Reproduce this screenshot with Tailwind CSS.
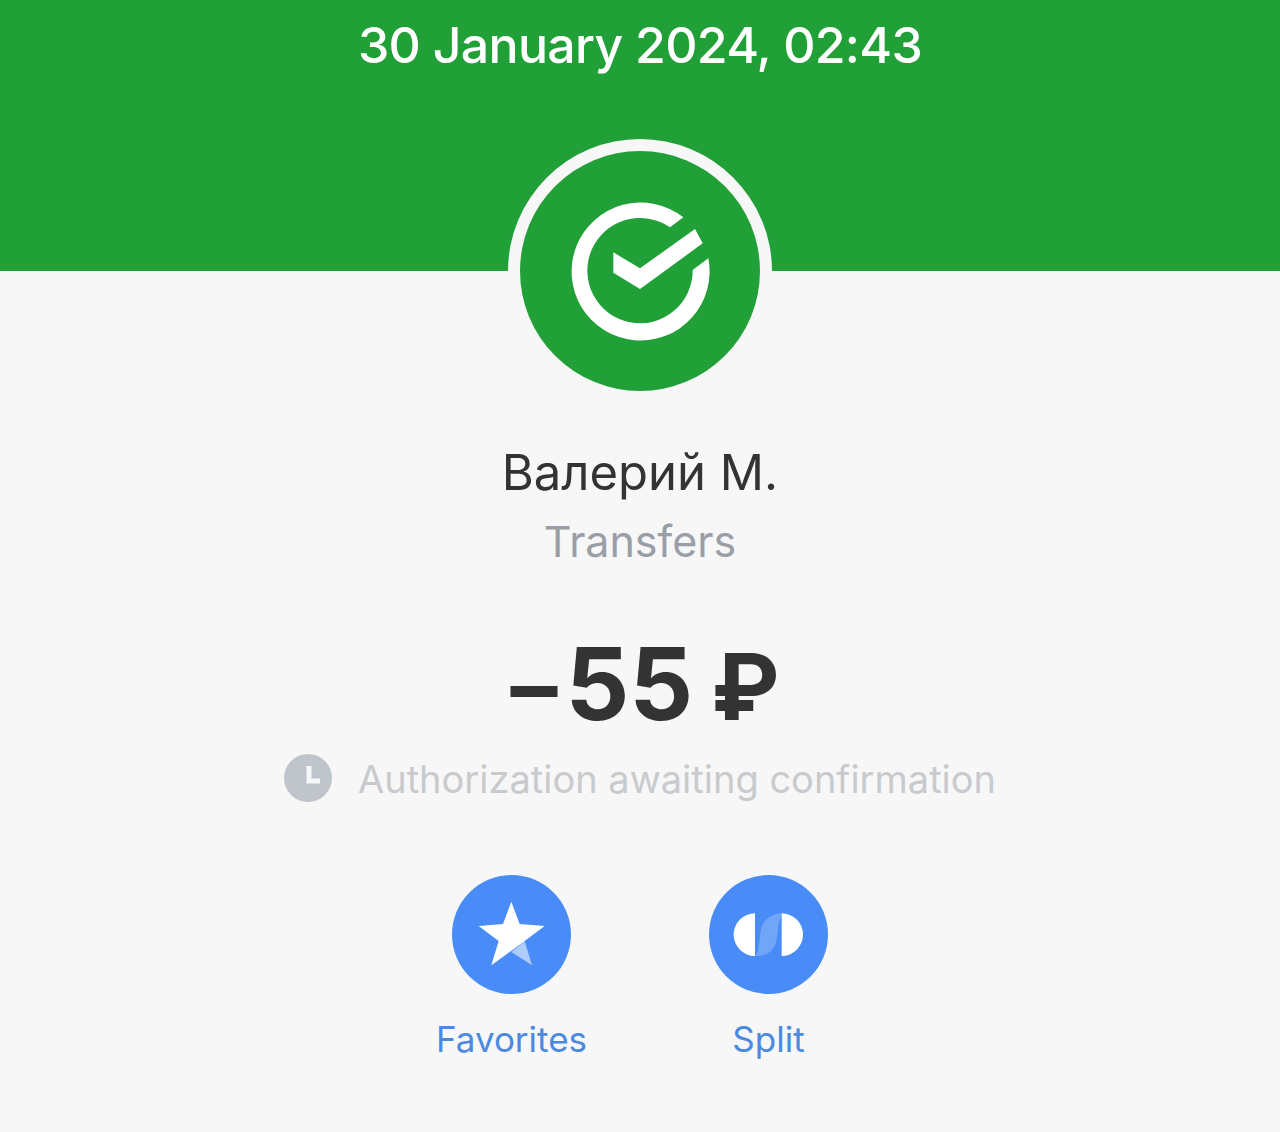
<!DOCTYPE html>
<html lang="en">

<head>
  <meta charset="UTF-8">
  <meta name="viewport" content="width=device-width, initial-scale=1.0">
  <title>Transfer details</title>
  <script src="https://cdn.jsdelivr.net/npm/@tailwindcss/browser@4"></script>
</head>

<body class="bg-[#f7f7f7] font-['Inter',sans-serif] overflow-hidden">

  <div class="w-[1280px] h-[1132px] flex flex-col items-center">

    <!-- Green header with date and logo -->
    <div class="relative w-full h-[271px] shrink-0 bg-[#21a038] text-center text-white text-[50px] tracking-[-0.7px] font-medium leading-[60px] pt-[15px]">
      30 January 2024, 02:43
      <div class="absolute left-[508px] top-[139px] w-[264px] h-[264px] rounded-full bg-[#f7f7f7] flex items-center justify-center">
        <div class="w-[240px] h-[240px] rounded-full bg-[#21a038] flex items-center justify-center">
          <svg class="w-[140px] h-[140px]" viewBox="210 213 420 420" fill="#fff">
            <path d="M550 262 A207 207 0 1 0 625 385 L578 420 A158 158 0 1 1 510 292 Z" />
            <path d="M340 367 L420 415 L585 297 L608 340 L420 477 L340 428 Z" />
          </svg>
        </div>
      </div>
    </div>

    <!-- Name and category -->
    <div class="mt-[172px] text-[49px] leading-[60px] text-[#333]">Валерий М.</div>
    <div class="mt-[13px] text-[43px] leading-[50px] text-[#9a9ea6]">Transfers</div>

    <!-- Amount -->
    <div class="mt-[58px] ml-[10px] text-[100px] leading-[120px] font-bold text-[#333] whitespace-nowrap"><span class="text-[94px] mr-[8px]">–</span>55<span class="text-[92px] ml-[18px]">₽</span></div>

    <!-- Status -->
    <div class="mt-[1px] flex items-center gap-[26px] h-[60px]">
      <svg class="w-[48px] h-[48px]" viewBox="0 0 48 48">
        <circle cx="24" cy="24" r="24" fill="#c0c4cb" />
        <path d="M25 12 V27 H36" fill="none" stroke="#f7f7f7" stroke-width="5" />
      </svg>
      <span class="mt-[2px] text-[38px] text-[#c8cacd]">Authorization awaiting confirmation</span>
    </div>

    <!-- Actions -->
    <div class="mt-[67px] flex gap-[138px]">
      <div class="w-[119px] flex flex-col items-center">
        <svg class="w-[119px] h-[119px]" viewBox="65 45 357 357">
          <circle cx="243.500" cy="223.500" r="178.500" fill="#4a8cf7" />
          <path d="M283 243 L305 316 L243 276 Z" fill="#fff" fill-opacity="0.55" />
          <path d="M243 125 L268 192 L343 198 L283 243 L183 316 L205 243 L145 198 L218 192 Z" fill="#fff" />
        </svg>
        <span class="mt-[20px] text-[35px] leading-[50px] text-[#4c8ae0] whitespace-nowrap">Favorites</span>
      </div>
      <div class="w-[119px] flex flex-col items-center">
        <svg class="w-[119px] h-[119px]" viewBox="837 45 357 357">
          <circle cx="1015.500" cy="223.500" r="178.500" fill="#4a8cf7" />
          <path d="M975 288 C992 280 985 215 1000 190 C1012 170 1035 160 1055 160 L1055 165 C1040 190 1048 240 1030 265 C1020 280 1005 288 975 288 Z" fill="#fff" fill-opacity="0.22" />
          <path d="M975 160 A64 64 0 0 0 975 288 Z" fill="#fff" />
          <path d="M1055 160 A64 64 0 0 1 1055 288 Z" fill="#fff" />
        </svg>
        <span class="mt-[20px] text-[35px] leading-[50px] text-[#4c8ae0] whitespace-nowrap">Split</span>
      </div>
    </div>

  </div>

</body>
</html>
